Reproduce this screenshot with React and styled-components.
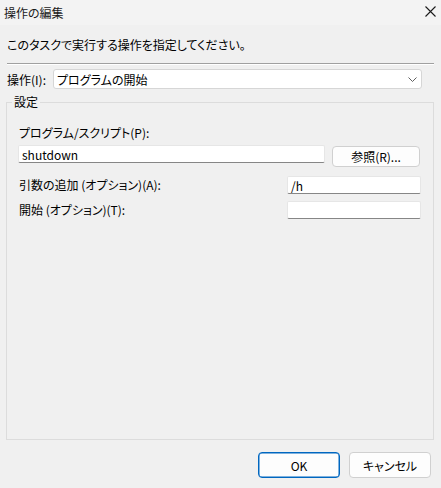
import React from "react";
import styled, { createGlobalStyle } from "styled-components";

const Global = createGlobalStyle`
  html, body { margin: 0; padding: 0; background: #f0f0f0; }
  * { box-sizing: border-box; }
  body {
    font-family: "Noto Sans CJK JP", "Noto Sans", sans-serif;
    font-size: 12px;
    color: #000;
    font-feature-settings: "palt" 1;
  }
`;

const Window = styled.div`
  width: 441px;
  height: 488px;
  display: flex;
  flex-direction: column;
  background: #f0f0f0;
`;

const TitleBar = styled.div`
  height: 25px;
  display: flex;
  align-items: center;
  justify-content: space-between;
  padding: 0 5px 0 4px;
  background: #f3f3f3;
  font-size: 12px;
  color: #1a1a1a;
`;

const Close = styled.svg`
  width: 11px;
  height: 11px;
  margin-top: -3px;
`;

const Body = styled.div`
  flex: 1;
  display: flex;
  flex-direction: column;
  padding: 0 7px 0 6px;
`;

const Instruction = styled.div`
  height: 38px;
  display: flex;
  align-items: center;
  padding-left: 1px;
  padding-top: 1px;
`;

const Separator = styled.div`
  margin-left: 1px;
  height: 2px;
  border-top: 1px solid #a0a0a0;
  border-bottom: 1px solid #ffffff;
`;

const ActionRow = styled.div`
  margin-top: 4px;
  display: flex;
  align-items: center;
  padding-left: 1px;
  padding-right: 12px;
`;

const ActionLabel = styled.span`
  width: 46px;
`;

const Combo = styled.div`
  flex: 1;
  height: 20px;
  background: #fff;
  border: 1px solid #d6d6d6;
  border-radius: 3px;
  display: flex;
  align-items: center;
  justify-content: space-between;
  padding: 0 4px 0 3px;
`;

const Chevron = styled.svg`
  width: 9px;
  height: 5px;
`;

const Group = styled.div`
  position: relative;
  margin-top: 13px;
  height: 338px;
  border: 1px solid #dcdcdc;
  padding: 23px 12px 0 11px;
  display: flex;
  flex-direction: column;
`;

const Legend = styled.span`
  position: absolute;
  top: -8px;
  left: 5px;
  padding: 0 2px;
  background: #f0f0f0;
  line-height: 14px;
`;

const Label = styled.span`
  line-height: 14px;
  padding-left: 1px;
`;

const ProgramRow = styled.div`
  margin-top: 5px;
  display: flex;
  align-items: flex-start;
  justify-content: space-between;
`;

const Field = styled.div`
  width: ${(p) => p.$w}px;
  height: 18px;
  background: #fff;
  border: 1px solid #e6e6e6;
  border-bottom-color: #868686;
  border-radius: 2px;
  display: flex;
  align-items: center;
  padding: 0 3px;
  font-size: 12px;
`;

const Button = styled.div`
  width: ${(p) => p.$w}px;
  height: ${(p) => p.$h}px;
  margin-top: ${(p) => p.$mt || 0}px;
  margin-right: ${(p) => p.$mr || 0}px;
  background: #fdfdfd;
  border: 1px solid ${(p) => (p.$primary ? "#0067c0" : "#d0d0d0")};
  box-shadow: ${(p) => (p.$primary ? "inset 0 0 0 0.5px #0067c0" : "none")};
  border-radius: 4px;
  display: flex;
  align-items: center;
  justify-content: center;
  font-size: 12px;
`;

const OptionRow = styled.div`
  margin-top: ${(p) => p.$mt}px;
  display: flex;
  align-items: center;
  justify-content: space-between;
`;

const Footer = styled.div`
  display: flex;
  justify-content: flex-end;
  gap: 9px;
  padding: 12px 3px 0 0;
`;

export default function App() {
  return (
    <>
      <Global />
      <Window>
        <TitleBar>
          <span>操作の編集</span>
          <Close viewBox="0 0 11 11">
            <path d="M0.5 0.5 L10.5 10.5 M10.5 0.5 L0.5 10.5" stroke="#1a1a1a" strokeWidth="1.1" fill="none" />
          </Close>
        </TitleBar>
        <Body>
          <Instruction>このタスクで実行する操作を指定してください。</Instruction>
          <Separator />
          <ActionRow>
            <ActionLabel>操作(I):</ActionLabel>
            <Combo>
              <span>プログラムの開始</span>
              <Chevron viewBox="0 0 9 5">
                <path d="M0.5 0.5 L4.5 4.5 L8.5 0.5" stroke="#5f5f5f" strokeWidth="1" fill="none" />
              </Chevron>
            </Combo>
          </ActionRow>
          <Group>
            <Legend>設定</Legend>
            <Label>プログラム/スクリプト(P):</Label>
            <ProgramRow>
              <Field $w={307}>shutdown</Field>
              <Button $w={88} $h={21} $mt={1} $mr={1}>参照(R)...</Button>
            </ProgramRow>
            <OptionRow $mt={9}>
              <Label>引数の追加 (オプション)(A):</Label>
              <Field $w={134}>/h</Field>
            </OptionRow>
            <OptionRow $mt={7}>
              <Label>開始 (オプション)(T):</Label>
              <Field $w={134} />
            </OptionRow>
          </Group>
          <Footer>
            <Button $w={82} $h={26} $primary>OK</Button>
            <Button $w={82} $h={26}>キャンセル</Button>
          </Footer>
        </Body>
      </Window>
    </>
  );
}
